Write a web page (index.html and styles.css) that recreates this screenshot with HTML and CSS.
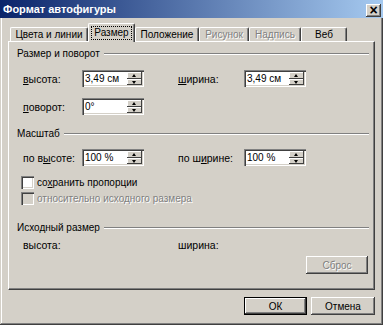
FILE: index.html
```html
<!DOCTYPE html>
<html lang="ru">
<head>
  <meta charset="UTF-8">
  <title>Формат автофигуры</title>
  <link rel="stylesheet" href="styles.css">
</head>
<body>
  <div class="window">
    <div class="titlebar">
      <span class="title">Формат автофигуры</span>
      <span class="close">×</span>
    </div>

    <div class="tabs">
      <div class="tab w1">Цвета и линии</div>
      <div class="tab active w2"><span class="focus">Размер</span></div>
      <div class="tab w3">Положение</div>
      <div class="tab disabled w4">Рисунок</div>
      <div class="tab disabled w5">Надпись</div>
      <div class="tab w6">Веб</div>
    </div>

    <div class="panel">
      <div class="group-head"><span>Размер и поворот</span><i class="rule"></i></div>
      <div class="fields first">
        <label><u>в</u>ысота:</label>
        <div class="spin"><span>3,49 см</span><b class="arrows"><i class="up"></i><i class="down"></i></b></div>
        <label><u>ш</u>ирина:</label>
        <div class="spin"><span>3,49 см</span><b class="arrows"><i class="up"></i><i class="down"></i></b></div>
        <label><u>п</u>оворот:</label>
        <div class="spin"><span>0°</span><b class="arrows"><i class="up"></i><i class="down"></i></b></div>
      </div>

      <div class="group-head second"><span>Масштаб</span><i class="rule"></i></div>
      <div class="fields scale">
        <label>по в<u>ы</u>соте:</label>
        <div class="spin"><span>100 %</span><b class="arrows"><i class="up"></i><i class="down"></i></b></div>
        <label>по ш<u>и</u>рине:</label>
        <div class="spin"><span>100 %</span><b class="arrows"><i class="up"></i><i class="down"></i></b></div>
      </div>
      <div class="check first-check"><i class="box"></i><span>со<u>х</u>ранить пропорции</span></div>
      <div class="check disabled"><i class="box"></i><span>относительно исходного размера</span></div>

      <div class="group-head third"><span>Исходный размер</span><i class="rule"></i></div>
      <div class="fields plain">
        <label>высота:</label>
        <span></span>
        <label>ширина:</label>
        <span></span>
      </div>
      <div class="reset-row"><button class="btn disabled">Сброс</button></div>
    </div>

    <div class="footer">
      <button class="btn default">ОК</button>
      <button class="btn cancel">Отмена</button>
    </div>
  </div>
</body>
</html>
```

FILE: styles.css
```css
html, body {
  margin: 0;
  padding: 0;
}

body {
  background: #d4d0c8;
  font-family: "Liberation Sans", Arial, sans-serif;
  font-size: 10px;
  color: #000;
}

.window {
  width: 383px;
  height: 325px;
  box-sizing: border-box;
  background: #d4d0c8;
  box-shadow: inset -1px -1px #404040, inset 1px 1px #d4d0c8,
              inset -2px -2px #808080, inset 2px 2px #fff;
  overflow: hidden;
}

/* заголовок окна */
.titlebar {
  height: 18px;
  display: flex;
  align-items: center;
  justify-content: space-between;
  padding: 0 2px 0 3px;
  background: linear-gradient(to right, #0a246a, #a6caf0);
}

.title {
  color: #fff;
  font-weight: bold;
  font-size: 11px;
}

.close {
  width: 15px;
  height: 13px;
  margin-top: 2px;
  background: #d4d0c8;
  box-shadow: inset -1px -1px #404040, inset 1px 1px #fff, inset -2px -2px #808080;
  font-size: 14px;
  font-weight: bold;
  line-height: 12px;
  text-align: center;
}

/* вкладки */
.tabs {
  display: flex;
  align-items: flex-end;
  height: 18px;
  margin-top: 5px;
  padding-left: 10px;
}

.tab {
  height: 14px;
  box-sizing: border-box;
  border-top: 1px solid #fff;
  border-left: 1px solid #fff;
  border-right: 1px solid #404040;
  box-shadow: inset -1px 0 #808080;
  border-radius: 2px 2px 0 0;
  text-align: center;
  line-height: 13px;
}

.tab.disabled {
  color: #808080;
  text-shadow: 1px 1px #fff;
}

.tab.active {
  height: 19px;
  margin-bottom: -1px;
  position: relative;
  z-index: 1;
  background: #d4d0c8;
  padding-top: 2px;
}

.focus {
  display: inline-block;
  padding: 0 2px;
  line-height: 12px;
  outline: 1px dotted #000;
}

.w1 { width: 78px; }
.w2 { width: 47px; }
.w3 { width: 64px; }
.w4 { width: 50px; }
.w5 { width: 52px; }
.w6 { width: 46px; }

/* панель */
.panel {
  margin: 0 8px;
  height: 249px;
  box-sizing: border-box;
  border-top: 1px solid #fff;
  border-left: 1px solid #fff;
  border-right: 1px solid #404040;
  border-bottom: 1px solid #404040;
  box-shadow: inset -1px -1px #808080;
  padding: 5px 5px 0 8px;
}

.group-head {
  display: flex;
  align-items: center;
  height: 13px;
  line-height: 13px;
}

.group-head.second { margin-top: 12px; }
.group-head.third { margin-top: 16px; }

.rule {
  flex: 1;
  margin-left: 4px;
  border-top: 1px solid #808080;
  border-bottom: 1px solid #fff;
}

.fields {
  display: grid;
  grid-template-columns: 59px 96px 66px 62px;
  row-gap: 11px;
  align-items: center;
  padding-left: 6px;
  margin-top: 10px;
  font-size: 10.5px;
}

.fields.scale { margin-top: 9px; }

.fields.plain {
  margin-top: 4px;
  height: 13px;
}

.spin {
  width: 62px;
  height: 17px;
  box-sizing: border-box;
  background: #fff;
  box-shadow: inset 1px 1px #808080, inset 2px 2px #404040,
              inset -1px -1px #fff, inset -2px -2px #d4d0c8;
  display: flex;
  align-items: center;
  padding: 2px 2px 2px 3px;
  line-height: 13px;
  font-size: 10px;
}

.spin span { flex: 1; }

.arrows {
  width: 15px;
  height: 13px;
  display: flex;
  flex-direction: column;
}

.arrows i {
  flex: 1;
  background: #d4d0c8;
  box-shadow: inset -1px -1px #404040, inset 1px 1px #fff;
  position: relative;
}

.arrows i::after {
  content: "";
  position: absolute;
  left: 5px;
  border-left: 2.5px solid transparent;
  border-right: 2.5px solid transparent;
}

.arrows .up::after {
  top: 2px;
  border-bottom: 3px solid #000;
}

.arrows .down::after {
  top: 2px;
  border-top: 3px solid #000;
}

/* флажки */
.check {
  display: flex;
  align-items: center;
  gap: 3px;
  height: 13px;
  padding-left: 4px;
  margin-top: 3px;
}

.check.first-check { margin-top: 10px; }

.box {
  width: 13px;
  height: 13px;
  box-sizing: border-box;
  background: #fff;
  box-shadow: inset 1px 1px #808080, inset 2px 2px #404040,
              inset -1px -1px #fff, inset -2px -2px #d4d0c8;
}

.check.disabled { color: #808080; text-shadow: 1px 1px #fff; }
.check.disabled .box { background: #d4d0c8; }

/* кнопки */
.btn {
  height: 18px;
  box-sizing: border-box;
  border: none;
  padding: 0;
  background: #d4d0c8;
  font-family: "Liberation Sans", Arial, sans-serif;
  font-size: 10px;
  color: #000;
  box-shadow: inset -1px -1px #404040, inset 1px 1px #fff, inset -2px -2px #808080;
}

.btn.disabled {
  width: 62px;
  color: #808080;
  text-shadow: 1px 1px #fff;
}

.reset-row {
  display: flex;
  justify-content: flex-end;
  margin-top: 5px;
  padding-right: 1px;
}

.footer {
  display: flex;
  justify-content: flex-end;
  gap: 4px;
  margin-top: 7px;
  padding-right: 8px;
}

.btn.default {
  width: 63px;
  box-shadow: inset 0 0 0 1px #000, inset -2px -2px #404040,
              inset 2px 2px #fff, inset -3px -3px #808080;
}

.btn.cancel { width: 64px; }
```
